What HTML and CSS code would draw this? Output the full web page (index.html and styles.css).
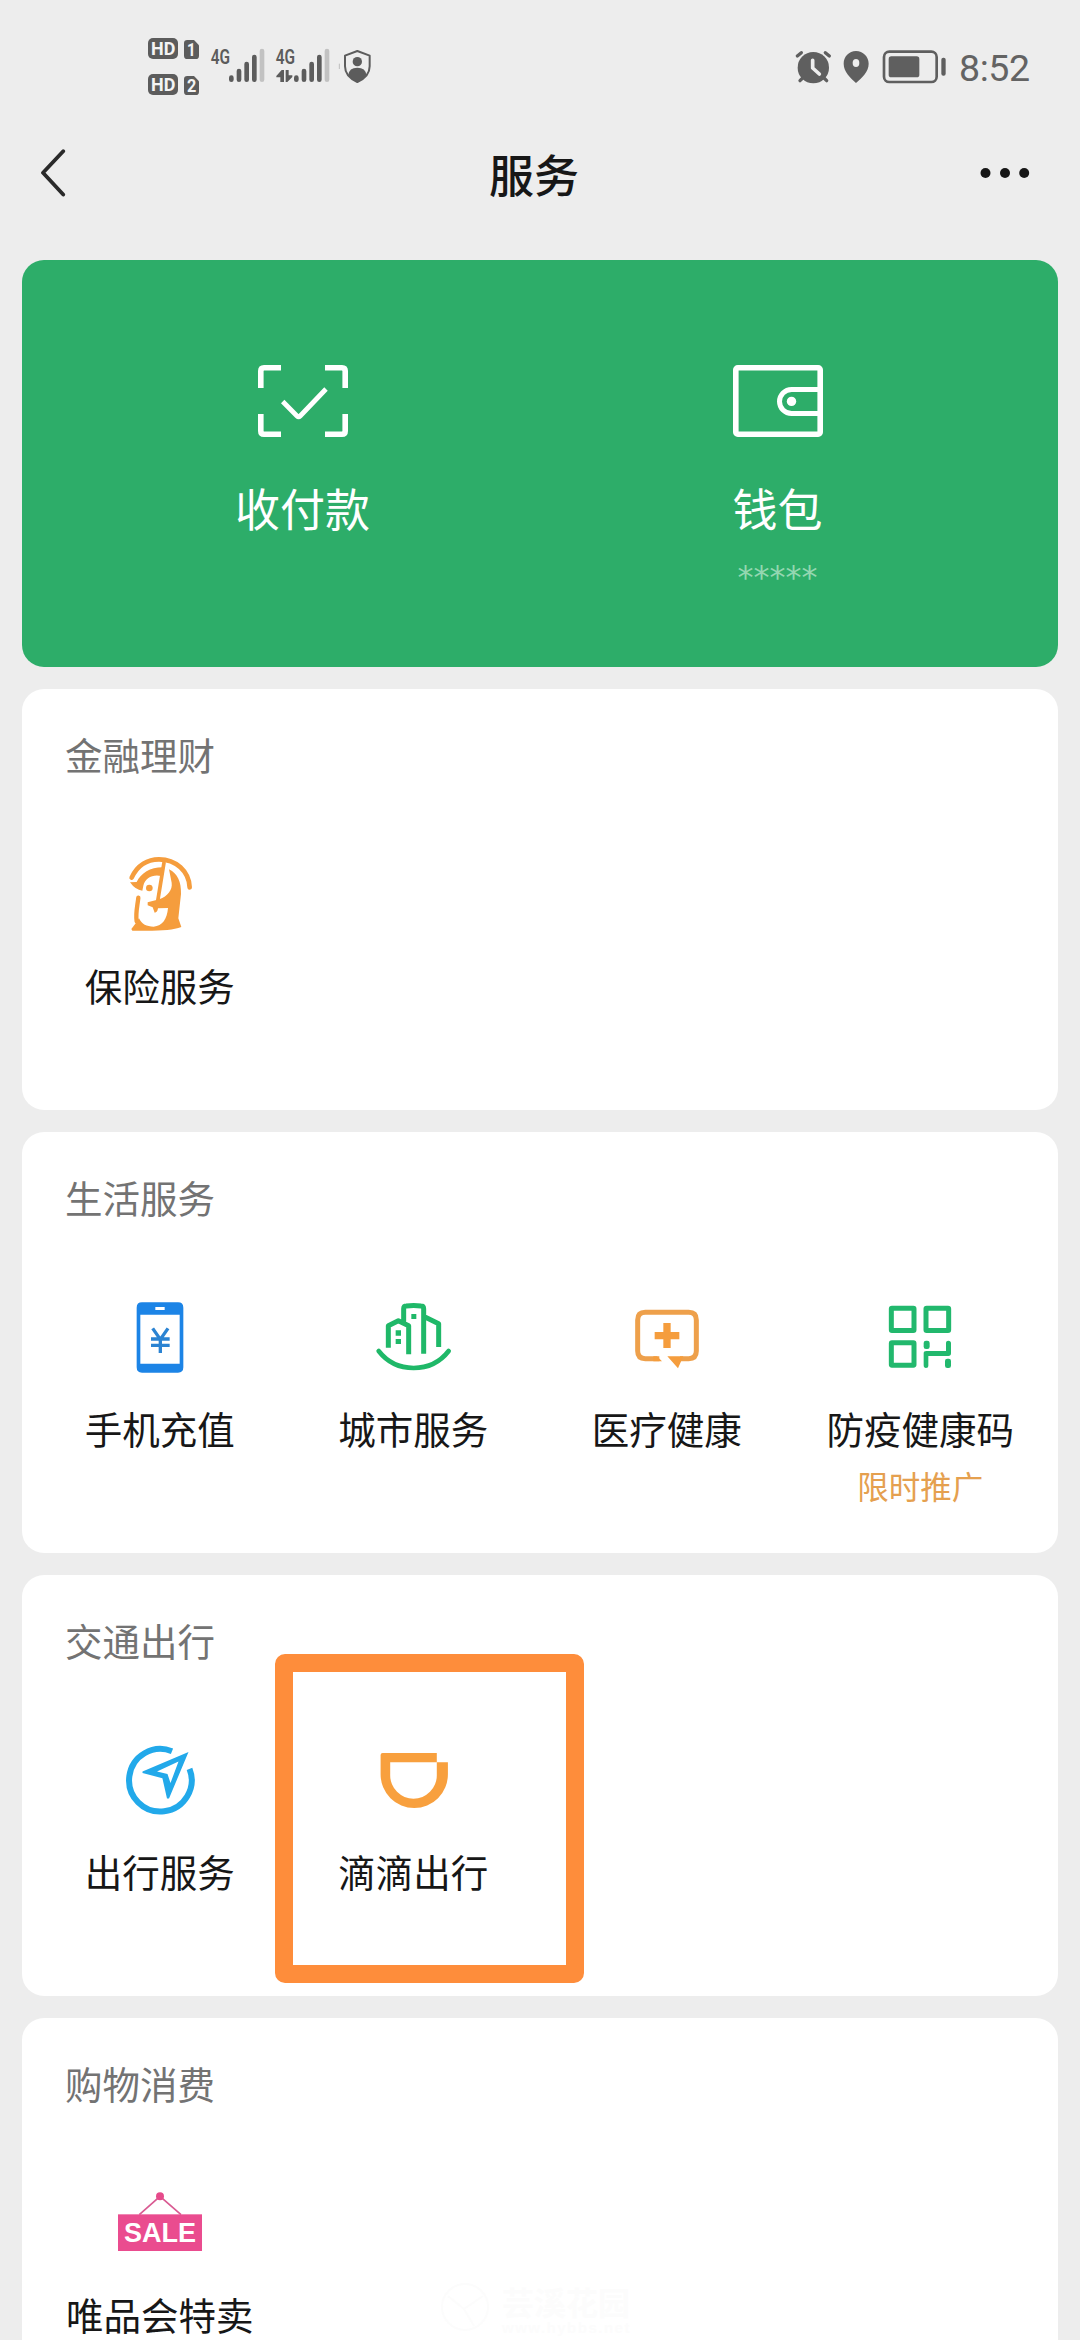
FILE: index.html
```html
<!DOCTYPE html>
<html lang="zh-CN">
<head>
<meta charset="utf-8">
<title>服务</title>
<link rel="stylesheet" href="styles.css">
</head>
<body>
<div class="screen">
  <div class="statusbar">
    <svg class="status-left" viewBox="0 0 780 270">
      <g fill="#5c5c5c">
        <rect x="54" y="54" width="90" height="63" rx="15"/>
        <path d="M172 60H192L207 76V107Q207 117 197 117H172Q162 117 162 107V70Q162 60 172 60Z"/>
        <rect x="54" y="162" width="90" height="63" rx="15"/>
        <path d="M172 168H192L207 184V215Q207 225 197 225H172Q162 225 162 215V178Q162 168 172 168Z"/>
      </g>
      <g class="badge-text">
        <text x="63" y="106" textLength="73" lengthAdjust="spacingAndGlyphs">HD</text>
        <text x="63" y="214" textLength="73" lengthAdjust="spacingAndGlyphs">HD</text>
        <text x="171" y="109" textLength="26" lengthAdjust="spacingAndGlyphs">1</text>
        <text x="171" y="217" textLength="28" lengthAdjust="spacingAndGlyphs">2</text>
      </g>
      <g class="net-text">
        <text x="242" y="132" textLength="58" lengthAdjust="spacingAndGlyphs">4G</text>
        <text x="437" y="132" textLength="58" lengthAdjust="spacingAndGlyphs">4G</text>
      </g>
      <g stroke="#5c5c5c" stroke-width="14" stroke-linecap="round">
        <path d="M304 173V179M327 153V179M350 132V179M373 111V179"/>
        <path d="M499 173V179M522 153V179M545 132V179M568 111V179"/>
        <path d="M396 93V179M591 93V179" stroke="#c2c2c2"/>
      </g>
      <path d="M462 186V150H455L439 168V172H451V186ZM467 150V186H472L487 171V166H476V150Z" fill="#5c5c5c"/>
      <path d="M682 93L719 107V139Q719 170 682 186Q645 170 645 139V107Z" fill="none" stroke="#5c5c5c" stroke-width="6" stroke-linejoin="round"/>
      <circle cx="682" cy="125" r="14" fill="#5c5c5c"/>
      <path d="M655 165Q657 143 682 143Q707 143 709 165Q699 180 682 187Q665 180 655 165Z" fill="#5c5c5c"/>
      <path d="M628 131V147" stroke="#bdbdbd" stroke-width="3"/>
    </svg>
    <div class="status-right">
      <svg class="status-icons" viewBox="40 50 465 120">
        <g fill="#5f5f5f">
          <circle cx="101" cy="112" r="47"/>
          <path d="M229 62C208 62 192 79 192 100C192 124 212 142 229 158C247 142 267 124 267 100C267 79 250 62 229 62Z"/>
          <rect x="327" y="78" width="92" height="63" rx="8"/>
          <rect x="485" y="82" width="13" height="54" rx="6"/>
        </g>
        <g fill="none" stroke="#5f5f5f" stroke-linecap="round">
          <path d="M53 77L65 67M149 77L137 67M69 143L61 151M133 143L141 151" stroke-width="10"/>
          <rect x="313" y="64" width="158" height="91" rx="16" stroke-width="8"/>
        </g>
        <path d="M99 90V113L119 131" fill="none" stroke="#ededed" stroke-width="11" stroke-linecap="round" stroke-linejoin="round"/>
        <ellipse cx="229" cy="98" rx="10" ry="12" fill="#ededed"/>
      </svg>
      <span class="clock">8:52</span>
    </div>
  </div>

  <header class="navbar">
    <svg class="back" viewBox="0 0 26 48"><path d="M23.2 2.2L3 23.8L23.2 45.5" fill="none" stroke="#2a2a2a" stroke-width="3.8" stroke-linecap="round" stroke-linejoin="round"/></svg>
    <h1 class="page-title">服务</h1>
    <svg class="more" viewBox="0 0 50 12"><g fill="#171717"><circle cx="5.5" cy="6" r="5"/><circle cx="25" cy="6" r="5"/><circle cx="44.2" cy="6" r="5"/></g></svg>
  </header>

  <main class="cards">
    <section class="pay-card">
      <div class="pay-item">
        <svg class="pay-icon" viewBox="0 0 90 72">
          <g fill="none" stroke="#fff" stroke-width="5.6">
            <path d="M2.8 23V6Q2.8 2.8 6 2.8H23M67 2.8H84Q87.2 2.8 87.2 6V23M87.2 49V66Q87.2 69.2 84 69.2H67M23 69.2H6Q2.8 69.2 2.8 66V49"/>
            <path d="M24.700 36.500L39 51Q40.600 52.600 42.200 51L68 24" stroke-width="4.800"/>
          </g>
        </svg>
        <span class="pay-label">收付款</span>
      </div>
      <div class="pay-item">
        <svg class="pay-icon" viewBox="0 0 90 72">
          <g fill="none" stroke="#fff" stroke-width="5.6">
            <rect x="2.8" y="2.8" width="84.4" height="66.4" rx="2"/>
            <path d="M87 24.4H58.6A12.1 12.1 0 0 0 58.6 48.6H87" stroke-width="5"/>
          </g>
          <circle cx="58.5" cy="36.4" r="4.7" fill="#fff"/>
        </svg>
        <span class="pay-label">钱包</span>
        <span class="pay-sub">*****</span>
      </div>
    </section>

    <section class="card">
      <h2 class="card-title">金融理财</h2>
      <div class="grid">
        <div class="item">
          <svg class="icon" viewBox="285 504 270 270">
            <g fill="none" stroke="#f59d3d" stroke-linecap="round">
              <path d="M335 593C352 555 384 538 417 538C468 538 507 574 509 622" stroke-width="14"/>
              <path d="M432 548L413 664" stroke-width="11"/>
              <path d="M355 653C352 680 346 702 350 724" stroke-width="13"/>
            </g>
            <path d="M330 607L350 606C363 580 390 562 428 562L424 588C398 582 375 594 370 617L367 632Q346 630 330 607Z" fill="#f59d3d"/>
            <path d="M447 568C473 581 484 606 483 642L475 715L484 741C455 752 418 753 337 752L334 747L346 731L357 715C365 733 380 740 401 740C428 738 441 717 444 684L414 685Q412 698 404 698L398 682L383 676V667L418 658C443 648 458 630 455 608Z" fill="#f59d3d"/>
            <circle cx="388" cy="624" r="10" fill="#f59d3d"/>
          </svg>
          <span class="label">保险服务</span>
        </div>
      </div>
    </section>

    <section class="card">
      <h2 class="card-title">生活服务</h2>
      <div class="grid">
        <div class="item">
          <svg class="icon" viewBox="165 363 270 270">
            <path fill-rule="evenodd" fill="#1c84e6" d="M246 397H354Q370 397 370 413V592Q370 608 354 608H246Q230 608 230 592V413Q230 397 246 397ZM241 434V581H359V434ZM286 411V420H314V411Z"/>
            <path d="M278 475L301 508L324 475M301 508V549M273 507H329M273 526H329" fill="none" stroke="#2b83d2" stroke-width="10"/>
          </svg>
          <span class="label">手机充值</span>
        </div>
        <div class="item">
          <svg class="icon" viewBox="925 363 270 270">
            <g fill="none" stroke="#1fb868">
              <path d="M986 533V467L1016 452L1047 467V553M1032 457V416Q1032 408 1040 408Q1062 405 1084 408Q1092 408 1092 416V551M1096 441L1137 461V531" stroke-width="15" stroke-linejoin="round"/>
              <path d="M957 543C985 579 1020 594 1062 594S1139 579 1167 543" stroke-width="14" stroke-linecap="round"/>
            </g>
            <path d="M1055 432H1070V447H1055ZM1008 481H1024V497H1008ZM1008 507H1024V522H1008Z" fill="#1fb868"/>
          </svg>
          <span class="label">城市服务</span>
        </div>
        <div class="item">
          <svg class="icon" viewBox="126 33 270 270">
            <path d="M238 236H196Q173 236 173 213V120Q173 97 196 97H326Q349 97 349 120V213Q349 236 326 236H300" fill="none" stroke="#eea04b" stroke-width="15"/>
            <path d="M262 229H310L294 265ZM231 229L246 244H220V229Z" fill="#f59d3d"/>
            <path d="M250 129H272V156H298V178H272V204H250V178H224V156H250Z" fill="#f59d3d"/>
          </svg>
          <span class="label">医疗健康</span>
        </div>
        <div class="item">
          <svg class="icon" viewBox="885 33 270 270">
            <g fill="none" stroke="#22b86d" stroke-width="15">
              <rect x="934" y="84.500" width="68" height="67" rx="2"/>
              <rect x="1038" y="84.500" width="68" height="67" rx="2"/>
              <rect x="934" y="188.500" width="68" height="67" rx="2"/>
            </g>
            <g fill="#22b86d">
              <rect x="1031" y="182" width="18" height="25" rx="7"/>
              <rect x="1095" y="236" width="18" height="28" rx="7"/>
              <path d="M1098 188Q1098 182 1105 182Q1113 182 1113 190V220Q1113 228 1105 228H1045V258Q1045 264 1038 264Q1031 264 1031 256V220Q1031 213 1039 213H1098Z"/>
            </g>
          </svg>
          <span class="label">防疫健康码</span>
          <span class="promo">限时推广</span>
        </div>
      </div>
    </section>

    <section class="card">
      <h2 class="card-title">交通出行</h2>
      <div class="grid">
        <div class="item">
          <svg class="icon" viewBox="0 0 90 90">
            <path d="M57 17.200A31.300 31.300 0 1 0 74.500 34.800" fill="none" stroke="#22a9ea" stroke-width="6"/>
            <path fill-rule="evenodd" fill="#22a9ea" d="M73.500 18L27.500 37.500V39L47.400 44.300L52 64.500H54ZM63.500 27.500L55.500 49L52.500 40L42 37.500Z"/>
          </svg>
          <span class="label">出行服务</span>
        </div>
        <div class="item">
          <svg class="icon" viewBox="0 0 90 90">
            <path fill="#f8a03e" d="M14.600 19H68.800V28.300H79.900V40.400A33.650 33.650 0 0 1 12.600 40.400V21Q12.600 19 14.600 19ZM22.200 28.300V41.400A23.300 23.300 0 0 0 68.800 41.400V28.300Z"/>
          </svg>
          <span class="label">滴滴出行</span>
        </div>
      </div>
      <div class="highlight"></div>
    </section>

    <section class="card">
      <h2 class="card-title">购物消费</h2>
      <div class="grid">
        <div class="item">
          <svg class="icon" viewBox="285 501 270 270">
            <path d="M358 614L420 559L483 614" fill="none" stroke="#d95a92" stroke-width="5"/>
            <circle cx="420" cy="559" r="12" fill="#e64b8b"/>
            <rect x="294" y="613" width="252" height="110" fill="#ea4c8f"/>
            <text class="sale-text" x="420" y="697" text-anchor="middle">SALE</text>
          </svg>
          <span class="label">唯品会特卖</span>
        </div>
      </div>
      <div class="watermark">
        <svg class="watermark-logo" viewBox="0 0 50 50"><path d="M25 2A23 23 0 1 0 25 48A23 23 0 1 0 25 2ZM8 14L24 27L43 14M24 27L34 44" fill="none" stroke="#fcfcfc" stroke-width="2"/></svg>
        <div class="watermark-text"><b>芸溪花园</b><span>www.hybbs.net</span></div>
      </div>
    </section>
  </main>
</div>
</body>
</html>
```
FILE: styles.css
```css
* { box-sizing: border-box; margin: 0; padding: 0; }

body {
  background: #ededed;
  font-family: "Noto Sans CJK SC", sans-serif;
  color: #171717;
}

.screen {
  width: 1080px;
  height: 2340px;
  overflow: hidden;
  background: #ededed;
}

svg { display: block; }

.statusbar {
  display: flex;
  justify-content: space-between;
  height: 130px;
  padding: 20px 50px 0 130px;
}

.status-left { width: 260px; height: 90px; }

.badge-text { fill: #f4f4f4; font: 700 55px Roboto, sans-serif; }
.net-text { fill: #5c5c5c; font: 600 62px Roboto, sans-serif; }

.status-right {
  display: flex;
  align-items: flex-start;
  width: 237px;
  padding-top: 27px;
}

.status-icons { width: 155px; height: 40px; }

.clock {
  margin-left: 11px;
  font: 400 37.5px/42px Roboto, sans-serif;
  letter-spacing: -0.4px;
  color: #636363;
}

.navbar {
  display: grid;
  grid-template-columns: 100px 1fr 112px;
  align-items: center;
  height: 90px;
  margin-bottom: 40px;
}

.back { width: 26px; height: 48px; margin-left: 40px; margin-bottom: 4px; }
.more { width: 50px; height: 12px; margin-left: 12px; margin-bottom: 4px; }

.page-title {
  margin-bottom: 3px;
  text-align: center;
  font-size: 45px;
  font-weight: 500;
  line-height: 66px;
}

.cards {
  display: flex;
  flex-direction: column;
  gap: 22px;
  padding: 0 22px;
}

.pay-card {
  display: grid;
  grid-template-columns: 1fr 1fr;
  height: 407px;
  padding: 105px 43px 0;
  border-radius: 22px;
  background: #2dad69;
}

.pay-item {
  display: flex;
  flex-direction: column;
  align-items: center;
  color: #fff;
}

.pay-icon { width: 90px; height: 72px; }
.pay-label { margin-top: 38px; font-size: 45px; line-height: 66px; }
.pay-sub { margin-top: 16px; font: 400 32px/40px "DejaVu Sans", sans-serif; color: #94d7b1; }

.card {
  position: relative;
  flex: none;
  height: 421px;
  padding: 37px 11px 0;
  border-radius: 22px;
  background: #fff;
}

.card-title {
  padding-left: 32px;
  font-size: 37.5px;
  font-weight: 400;
  line-height: 56px;
  color: #737373;
}

.grid {
  display: grid;
  grid-template-columns: repeat(4, 1fr);
  margin-top: 66px;
}

.item {
  display: flex;
  flex-direction: column;
  align-items: center;
  white-space: nowrap;
}

.icon { width: 90px; height: 90px; }
.label { margin-top: 25px; font-size: 37.5px; line-height: 44px; }
.promo { margin-top: 12px; font-size: 31.5px; line-height: 46px; color: #e5a04f; }
.sale-text { fill: #fff; font: 700 81px "Liberation Sans", sans-serif; }

.highlight {
  position: absolute;
  left: 252.5px;
  top: 79px;
  width: 309.5px;
  height: 329px;
  border: 18px solid #fe8d3b;
  border-radius: 10px;
}

.watermark {
  position: absolute;
  left: 418px;
  top: 264px;
  display: flex;
  gap: 12px;
  color: #fcfcfc;
}

.watermark-logo { width: 50px; height: 50px; }
.watermark-text { display: flex; flex-direction: column; }
.watermark-text b { font-size: 32px; line-height: 38px; }
.watermark-text span { font: 700 15px/16px "Liberation Sans", sans-serif; letter-spacing: 1.5px; }
```
